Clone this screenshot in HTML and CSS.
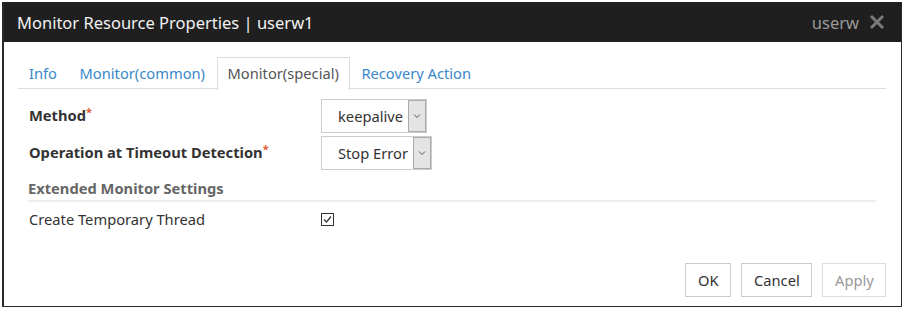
FILE: index.html
```html
<!DOCTYPE html>
<html>
<head>
<meta charset="utf-8">
<link rel="stylesheet" href="styles.css">
</head>
<body>
<div class="dialog">
  <div class="header">
    <span class="title">Monitor Resource Properties | userw1</span>
    <span class="user">userw</span>
    <svg class="close" width="16" height="16" viewBox="0 0 16 16"><path d="M2 2 L14 14 M14 2 L2 14" stroke="#7a7a7a" stroke-width="3" stroke-linecap="butt"/></svg>
  </div>
  <div class="body">
    <div class="tabs">
      <div class="tab">Info</div>
      <div class="tab">Monitor(common)</div>
      <div class="tab active">Monitor(special)</div>
      <div class="tab">Recovery Action</div>
    </div>
    <div class="form">
      <div class="row first">
        <div class="label bold">Method<span class="req">*</span></div>
        <div class="select"><span class="val">keepalive</span><span class="arrow"><svg width="8" height="6" viewBox="0 0 8 6"><path d="M1 1.5 L4 4.5 L7 1.5" fill="none" stroke="#555" stroke-width="1"/></svg></span></div>
      </div>
      <div class="row second">
        <div class="label bold">Operation at Timeout Detection<span class="req">*</span></div>
        <div class="select"><span class="val">Stop Error</span><span class="arrow"><svg width="8" height="6" viewBox="0 0 8 6"><path d="M1 1.5 L4 4.5 L7 1.5" fill="none" stroke="#555" stroke-width="1"/></svg></span></div>
      </div>
      <div class="section">Extended Monitor Settings</div>
      <div class="row check">
        <div class="label">Create Temporary Thread</div>
        <svg class="cb" width="13" height="13" viewBox="0 0 13 13"><rect x="0.5" y="0.5" width="12" height="12" fill="#fff" stroke="#333"/><path d="M3 6.5 L5.5 9 L10 3.5" fill="none" stroke="#333" stroke-width="1.2"/></svg>
      </div>
    </div>
    <div class="buttons">
      <div class="btn ok">OK</div>
      <div class="btn cancel">Cancel</div>
      <div class="btn disabled">Apply</div>
    </div>
  </div>
</div>
</body>
</html>
```
FILE: styles.css
```css
* { box-sizing: border-box; }
html, body { background: #fff; }
body {
  margin: 2px 0 0 2px;
  font-family: "Noto Sans", sans-serif;
  font-size: 14.7px;
  color: #333;
}
.dialog {
  width: 900px;
  height: 305px;
  border: 1px solid #2a2a2a;
  border-left-width: 2px;
  border-top: none;
  display: flex;
  flex-direction: column;
}
.header {
  height: 40px;
  background: #1f1f1f;
  display: flex;
  align-items: center;
  padding: 0 16px 0 13px;
}
.title {
  color: #f2f2f2;
  font-size: 16.5px;
  flex: 1;
}
.user {
  color: #9a9a9a;
  font-size: 16.5px;
  margin-right: 10px;
}
.close { display: block; }
.body {
  flex: 1;
  display: flex;
  flex-direction: column;
  padding: 15px 15px 9px 14px;
}
.tabs {
  display: flex;
  height: 32px;
  border-bottom: 1px solid #ddd;
}
.tab {
  padding: 0 10px;
  margin-right: 0.5px;
  height: 32px;
  line-height: 30px;
  color: #3a87c9;
  border: 1px solid transparent;
  border-bottom: none;
}
.tab.active {
  color: #555;
  border-color: #ddd;
  background: #fff;
  height: 33px;
}
.form {
  padding: 10px 0 0 11px;
  flex: 1;
}
.row {
  display: flex;
  align-items: flex-start;
}
.label {
  width: 292px;
  padding-top: 5px;
}
.bold { font-weight: bold; }
.req {
  color: #e0552b;
  font-size: 11px;
  vertical-align: 5px;
  font-weight: bold;
}
.select {
  display: flex;
  height: 34px;
  border: 1px solid #ccc;
  background: #fff;
}
.second { margin-top: 3px; }
.val {
  padding: 0 5px 0 16px;
  line-height: 32px;
  color: #333;
}
.arrow {
  width: 18px;
  background: #e4e4e4;
  border: 1px solid #aaa;
  height: 32px;
  display: flex;
  align-items: center;
  justify-content: center;
}
.section {
  margin-top: 8px;
  font-weight: bold;
  color: #666;
  padding-bottom: 2px;
  border-bottom: 2px solid #eee;
  width: 848px;
  margin-left: -1px;
}
.check {
  margin-top: 7px;
  align-items: center;
}
.check .label { padding-top: 0; }
.cb { display: block; }
.buttons {
  display: flex;
  justify-content: flex-end;
  gap: 10px;
}
.btn {
  height: 34px;
  line-height: 32px;
  border: 1px solid #ccc;
  padding: 0 12px;
  text-align: center;
  color: #333;
}
.btn.ok { width: 46px; }
.btn.cancel { width: 71px; }
.btn.disabled { width: 64px; color: #999; border-color: #ddd; }
```
